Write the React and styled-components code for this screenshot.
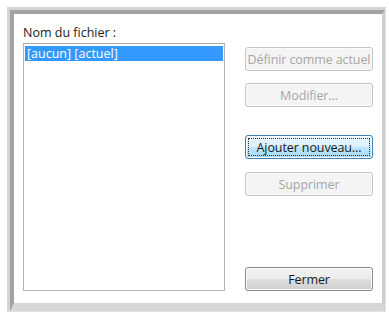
import React from "react";
import styled, { createGlobalStyle } from "styled-components";

const GlobalStyle = createGlobalStyle`
  html, body {
    margin: 0;
    padding: 0;
    background: #ffffff;
  }
  body {
    font-family: "Open Sans", "DejaVu Sans", sans-serif;
  }
`;

const Page = styled.div`
  width: 389px;
  height: 314px;
  padding: 7px 3px 2px 7px;
  box-sizing: border-box;
`;

const Frame = styled.div`
  height: 100%;
  box-sizing: border-box;
  border-top: 3px solid #d4d4d4;
  border-left: 3px solid #d4d4d4;
  border-right: 1px solid #e2e2e2;
  border-bottom: 1px solid #e2e2e2;
  display: flex;
`;

const Panel = styled.div`
  flex: 1;
  box-sizing: border-box;
  background: #ffffff;
  border-top: 4px solid #a2a2a2;
  border-left: 4px solid #a2a2a2;
  border-right: 3px solid #cfcfcf;
  border-bottom: 8px solid #d6d6d6;
  padding: 11px 8px 12px 9px;
  display: grid;
  grid-template-columns: 202px 128px;
  grid-template-rows: auto 1fr;
  column-gap: 20px;
`;

const Label = styled.div`
  grid-column: 1 / 3;
  font-size: 12.5px;
  line-height: 15px;
  color: #1c1c1c;
  margin-bottom: 3px;
`;

const FileList = styled.div`
  border: 1px solid #b4b4b4;
  border-top-color: #a8a8a8;
  background: #ffffff;
  padding: 2px 1px;
`;

const Item = styled.div`
  background: ${(p) => (p.$selected ? "#3399ff" : "transparent")};
  color: ${(p) => (p.$selected ? "#ffffff" : "#1c1c1c")};
  font-size: 12.5px;
  line-height: 15px;
  padding: 0 2px;
`;

const Actions = styled.div`
  display: flex;
  flex-direction: column;
  padding-top: 4px;
`;

const Button = styled.button`
  height: 24px;
  width: 128px;
  box-sizing: border-box;
  margin-top: ${(p) => p.$gap || 0}px;
  font-family: inherit;
  font-size: 12.5px;
  letter-spacing: -0.1px;
  white-space: nowrap;
  padding: 0;
  border-radius: 3px;
  border: 1px solid ${(p) => (p.$disabled ? "#c4c4c4" : p.$focus ? "#3c7fb1" : "#8a8a8a")};
  color: ${(p) => (p.$disabled ? "#a6a6a6" : "#1a1a1a")};
  background: ${(p) =>
    p.$disabled
      ? "#f4f4f4"
      : p.$focus
      ? "linear-gradient(#eaf6fd, #d9f0fc 50%, #bee6fd 51%, #a7d9f5)"
      : "linear-gradient(#f2f2f2, #ebebeb 50%, #dddddd 51%, #cfcfcf)"};
  box-shadow: inset 0 0 0 1px ${(p) => (p.$disabled ? "#fbfbfb" : "#fcfcfc")};
  position: relative;
  cursor: default;

  &::after {
    content: "";
    display: ${(p) => (p.$focus ? "block" : "none")};
    position: absolute;
    inset: 2px;
    border: 1px dotted #333;
  }
`;

const Spacer = styled.div`
  flex: 1;
`;

const App = () => {
  return (
    <Page>
      <GlobalStyle />
      <Frame>
        <Panel>
          <Label>Nom du fichier :</Label>
          <FileList>
            <Item $selected>[aucun] [actuel]</Item>
          </FileList>
          <Actions>
            <Button $disabled>Définir comme actuel</Button>
            <Button $disabled $gap={12}>Modifier...</Button>
            <Button $focus $gap={28}>Ajouter nouveau...</Button>
            <Button $disabled $gap={13}>Supprimer</Button>
            <Spacer />
            <Button>Fermer</Button>
          </Actions>
        </Panel>
      </Frame>
    </Page>
  );
};

export default App;
